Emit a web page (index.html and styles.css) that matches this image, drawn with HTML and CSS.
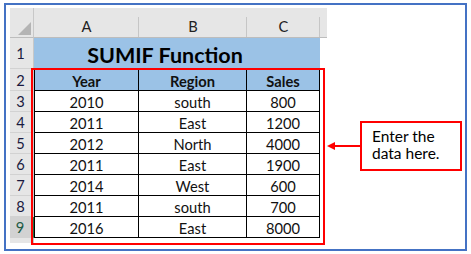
FILE: index.html
```html
<!DOCTYPE html>
<html>
<head>
<meta charset="utf-8">
<link rel="stylesheet" href="styles.css">
</head>
<body>
<div class="frame">
  <div class="sheet">
    <div class="corner"><span class="tri"></span></div>
    <div class="colhead">A</div>
    <div class="colhead">B</div>
    <div class="colhead">C</div>
    <div class="colhead end"></div>

    <div class="rowhead">1</div>
    <div class="title">SUMIF Function</div>
    <div class="blank"></div>

    <div class="rowhead">2</div>
    <div class="cell th first">Year</div>
    <div class="cell th">Region</div>
    <div class="cell th">Sales</div>
    <div class="blank"></div>

    <div class="rowhead">3</div>
    <div class="cell first">2010</div><div class="cell">south</div><div class="cell">800</div><div class="blank"></div>
    <div class="rowhead">4</div>
    <div class="cell first">2011</div><div class="cell">East</div><div class="cell">1200</div><div class="blank"></div>
    <div class="rowhead">5</div>
    <div class="cell first">2012</div><div class="cell">North</div><div class="cell">4000</div><div class="blank"></div>
    <div class="rowhead">6</div>
    <div class="cell first">2011</div><div class="cell">East</div><div class="cell">1900</div><div class="blank"></div>
    <div class="rowhead">7</div>
    <div class="cell first">2014</div><div class="cell">West</div><div class="cell">600</div><div class="blank"></div>
    <div class="rowhead">8</div>
    <div class="cell first">2011</div><div class="cell">south</div><div class="cell">700</div><div class="blank"></div>
    <div class="rowhead sel">9</div>
    <div class="cell first">2016</div><div class="cell">East</div><div class="cell">8000</div><div class="blank"></div>

    <div class="rowhead tail"></div>
  </div>

  <div class="redbox"></div>
  <svg class="arrow" width="34" height="10" viewBox="0 0 34 10">
    <line x1="6" y1="5" x2="34" y2="5" stroke="#FF0000" stroke-width="2"/>
    <polygon points="0,5 8,1 8,9" fill="#FF0000"/>
  </svg>
  <div class="callout">
    <div class="line">Enter the</div>
    <div class="line">data here.</div>
  </div>
</div>
</body>
</html>
```

FILE: styles.css
```css
* { box-sizing: border-box; }
html, body { margin: 0; padding: 0; background: #fff; }
body {
  font-family: "Lato", "Liberation Sans", sans-serif;
  color: #111;
}
.frame {
  position: relative;
  margin: 3px 0 0 4px;
  width: 463px;
  height: 248px;
  border: 2px solid #4472C4;
  padding: 3px 0 0 4px;
}
.sheet {
  display: grid;
  grid-template-columns: 24px 105px 108px 73px 7px;
  grid-template-rows: 30px 31px 22px repeat(7, 21px) 5px;
  width: 317px;
  font-size: 14.7px;
}
.corner {
  position: relative;
  background: #E6E6E6;
  border-right: 1px solid #C8C8C8;
  border-bottom: 1px solid #BDBDBD;
}
.tri {
  position: absolute;
  right: 2px;
  bottom: 2px;
  width: 0;
  height: 0;
  border-left: 13px solid transparent;
  border-bottom: 13px solid #B4B4B4;
}
.colhead {
  background: linear-gradient(#C6C6C6, #C6C6C6) right bottom / 1px 20px no-repeat, #E6E6E6;
  border-bottom: 1px solid #BDBDBD;
  display: flex;
  align-items: flex-end;
  justify-content: center;
  padding-bottom: 2px;
  font-size: 14.7px;
  color: #222;
}
.colhead.end { background: #E6E6E6; }
.rowhead {
  grid-column: 1;
  background: #E6E6E6;
  border-bottom: 1px solid #D2D2D2;
  border-right: 1px solid #C8C8C8;
  display: flex;
  align-items: center;
  justify-content: center;
  padding-right: 2px;
  color: #1a1a40;
}
.rowhead.sel {
  background: #D2D2D2;
  color: #1E5B45;
  border-right: 2px solid #217346;
}
.rowhead.tail { border-bottom: none; }
.title {
  grid-column: 2 / span 3;
  background: #9BC2E6;
  font-weight: 700;
  font-size: 21.5px;
  display: flex;
  align-items: center;
  justify-content: center;
  padding: 2px 24px 0 0;
  color: #000;
}
.blank { background: #fff; }
.cell {
  border-right: 1px solid #000;
  border-bottom: 1px solid #000;
  display: flex;
  align-items: center;
  justify-content: center;
  padding-top: 1px;
  background: #fff;
}
.cell.first { border-left: 1px solid #000; }
.cell.th {
  background: #9BC2E6;
  font-weight: 700;
  border-top: 1px solid #000;
}
.redbox {
  position: absolute;
  left: 25px;
  top: 63px;
  width: 294px;
  height: 177px;
  border: 2px solid #FF0000;
}
.arrow {
  position: absolute;
  left: 321px;
  top: 136px;
}
.callout {
  position: absolute;
  left: 354px;
  top: 116px;
  width: 102px;
  height: 50px;
  border: 2px solid #FF0000;
  background: #fff;
  padding: 5px 0 0 10px;
  font-size: 15.5px;
  color: #000;
}
.callout .line {
  height: 17px;
  line-height: 17px;
  white-space: nowrap;
}
```
